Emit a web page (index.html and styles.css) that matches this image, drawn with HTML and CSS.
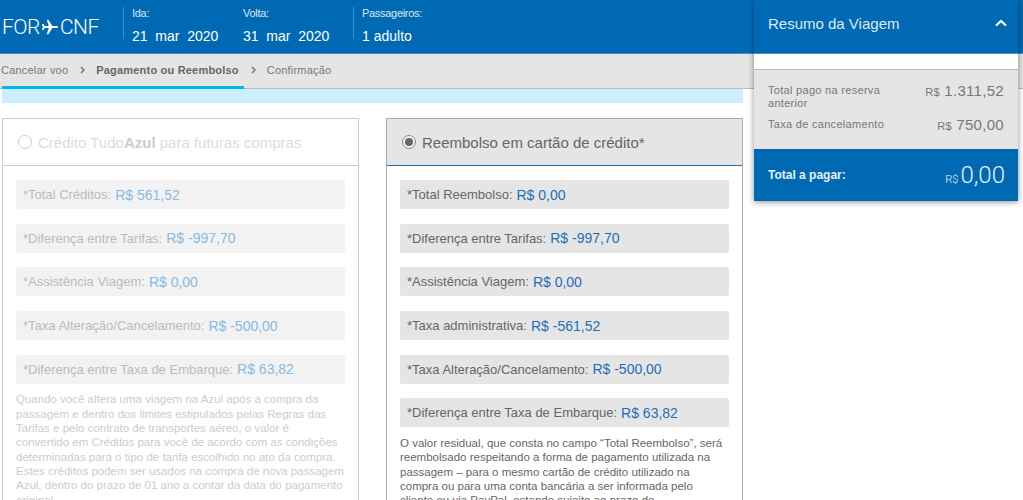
FILE: index.html
```html
<!DOCTYPE html>
<html>
<head>
	<title>Pagamento ou Reembolso</title>
	<meta name="viewport" content="width=device-width,initial-scale=1">
	<link rel="stylesheet" href="styles.css">
</head>
<body>

	<div class="topbar">
		<div class="route">
			<span>FOR</span>
			<svg class="plane" viewBox="0 0 20 20" width="18" height="18"><path d="M19 10c0-.8-.8-1.200-1.800-1.200h-4.600L8.200 2H6.300l2.300 6.800H4.200L2.600 6.600H1l1 3.400-1 3.400h1.600l1.600-2.200h4.400L6.300 18h1.900l4.400-6.800h4.600c1 0 1.800-.4 1.800-1.200z" fill="#fff"/></svg>
			<span>CNF</span>
		</div>
		<div class="info info-first">
			<label>Ida:</label>
			<strong>21 &nbsp;mar &nbsp;2020</strong>
		</div>
		<div class="info">
			<label>Volta:</label>
			<strong>31 &nbsp;mar &nbsp;2020</strong>
		</div>
		<div class="info info-last">
			<label>Passageiros:</label>
			<strong>1 adulto</strong>
		</div>
	</div>

	<div class="steps">
		<span class="step">Cancelar voo</span>
		<svg class="sep" viewBox="0 0 6 8" width="6" height="8"><path d="M1 1l3 3-3 3" fill="none" stroke="#777" stroke-width="1.500"/></svg>
		<span class="step active">Pagamento ou Reembolso</span>
		<svg class="sep" viewBox="0 0 6 8" width="6" height="8"><path d="M1 1l3 3-3 3" fill="none" stroke="#777" stroke-width="1.500"/></svg>
		<span class="step">Confirmação</span>
	</div>

	<div class="main">
		<div class="notice"></div>

		<div class="options">
			<div class="card disabled">
				<div class="card-head">
					<span class="radio"></span>
					<span>Crédito Tudo<b>Azul</b> para futuras compras</span>
				</div>
				<div class="card-body">
					<div class="row">*Total Créditos: <span class="val">R$ 561,52</span></div>
					<div class="row">*Diferença entre Tarifas: <span class="val">R$ -997,70</span></div>
					<div class="row">*Assistência Viagem: <span class="val">R$ 0,00</span></div>
					<div class="row">*Taxa Alteração/Cancelamento: <span class="val">R$ -500,00</span></div>
					<div class="row">*Diferença entre Taxa de Embarque: <span class="val">R$ 63,82</span></div>
					<p>Quando você altera uma viagem na Azul após a compra da passagem e dentro dos limites estipulados pelas Regras das Tarifas e pelo contrato de transportes aéreo, o valor é convertido em Créditos para você de acordo com as condições determinadas para o tipo de tarifa escolhido no ato da compra. Estes créditos podem ser usados na compra de nova passagem Azul, dentro do prazo de 01 ano a contar da data do pagamento original.</p>
				</div>
			</div>

			<div class="card selected">
				<div class="card-head">
					<span class="radio checked"></span>
					<span>Reembolso em cartão de crédito*</span>
				</div>
				<div class="card-body">
					<div class="row">*Total Reembolso: <span class="val">R$ 0,00</span></div>
					<div class="row">*Diferença entre Tarifas: <span class="val">R$ -997,70</span></div>
					<div class="row">*Assistência Viagem: <span class="val">R$ 0,00</span></div>
					<div class="row">*Taxa administrativa: <span class="val">R$ -561,52</span></div>
					<div class="row">*Taxa Alteração/Cancelamento: <span class="val">R$ -500,00</span></div>
					<div class="row">*Diferença entre Taxa de Embarque: <span class="val">R$ 63,82</span></div>
					<p>O valor residual, que consta no campo “Total Reembolso”, será reembolsado respeitando a forma de pagamento utilizada na passagem – para o mesmo cartão de crédito utilizado na compra ou para uma conta bancária a ser informada pelo cliente ou via PayPal, estando sujeito ao prazo de processamento do pedido.</p>
				</div>
			</div>
		</div>
	</div>

	<div class="summary">
		<div class="summary-head">
			<span>Resumo da Viagem</span>
			<svg viewBox="0 0 12 8" width="12" height="8"><path d="M1 6.500l5-4.500 5 4.500" fill="none" stroke="#fff" stroke-width="2.200"/></svg>
		</div>
		<div class="summary-gap"></div>
		<div class="summary-list">
			<div class="line">
				<span class="line-label">Total pago na reserva anterior</span>
				<span class="price"><small>R$</small> 1.311,52</span>
			</div>
			<div class="line">
				<span class="line-label">Taxa de cancelamento</span>
				<span class="price"><small>R$</small> 750,00</span>
			</div>
		</div>
		<div class="summary-total">
			<span>Total a pagar:</span>
			<span class="total-price"><small>R$</small>0,00</span>
		</div>
	</div>

</body>
</html>
```

FILE: styles.css
```css
*{
	box-sizing: border-box;
	padding: 0;
	margin: 0;
}

html, body{
	height: 100%;
	overflow: hidden;
}

body{
	background-color: #fff;
	font-family: "Liberation Sans", Arial, sans-serif;
	color: #666;
}

.topbar{
	height: 54px;
	background-color: #0069b4;
	border-bottom: 1px solid #3f8fca;
	color: #fff;
	display: flex;
	align-items: flex-start;
}

.route{
	width: 123px;
	height: 53px;
	padding-left: 2px;
	display: flex;
	align-items: center;
	gap: 1px;
	font-family: Roboto, sans-serif;
	font-weight: 300;
	font-size: 21px;
	letter-spacing: -.5px;
}

.info{
	margin-top: 7px;
	height: 32px;
	display: flex;
	flex-direction: column;
	width: 111px;
}
.info-first{
	border-left: 1px solid #3f8fca;
	padding-left: 8px;
	width: 120px;
}
.info-last{
	border-left: 1px solid #3f8fca;
	padding-left: 8px;
	margin-left: -1px;
}
.info label{
	font-size: 11px;
	letter-spacing: -.3px;
	line-height: 12px;
	color: #d7e8f4;
}
.info strong{
	font-weight: normal;
	font-size: 14px;
	line-height: 16px;
	margin-top: 9px;
	white-space: nowrap;
}

.steps{
	height: 35px;
	background-color: #e5e5e5;
	border-bottom: 1px solid #bbb;
	padding-left: 1px;
	display: flex;
	align-items: center;
	font-size: 11px;
	letter-spacing: .2px;
	color: #777;
	padding-bottom: 3px;
	position: relative;
}
.step.active{
	font-weight: bold;
	color: #666;
}
.sep{
	margin: 0 10px 0 12px;
}
.steps .active::after{
	content: "";
	position: absolute;
	left: 2px;
	width: 242px;
	bottom: -1px;
	height: 3px;
	background-color: #00b5e8;
}

.main{
	padding: 0 280px 0 2px;
}

.notice{
	height: 14px;
	background-color: #ccefff;
}

.options{
	display: grid;
	grid-template-columns: 357px 357px;
	column-gap: 27px;
	margin-top: 15px;
}

.card{
	border: 1px solid #ccc;
	padding-bottom: 40px;
}
.card-head{
	height: 47px;
	padding-left: 15px;
	display: flex;
	align-items: center;
	gap: 6px;
	font-size: 15px;
	border-bottom: 1px solid #ccc;
}
.card-body{
	padding: 14px 13px 0;
}

.radio{
	width: 14px;
	height: 14px;
	border-radius: 50%;
	border: 1px solid #ccc;
	background-color: #fff;
	position: relative;
}
.radio.checked{
	border-color: #888;
	background-color: #f2f2f2;
}
.radio.checked::after{
	content: "";
	position: absolute;
	left: 2px;
	top: 2px;
	width: 8px;
	height: 8px;
	border-radius: 50%;
	background-color: #666;
}

.row{
	height: 29px;
	margin-bottom: 14.7px;
	padding-left: 7px;
	display: flex;
	align-items: center;
	gap: 4px;
	font-size: 13px;
	background-color: #e5e5e5;
	border-radius: 2px;
}
.val{
	font-size: 14px;
	color: #1f6db5;
}

.card p{
	font-size: 11.5px;
	line-height: 14.3px;
	margin-top: -6px;
	color: #666;
}

.disabled{
	color: #ccc;
}
.disabled .row{
	background-color: #f2f2f2;
	color: #bbb;
}
.disabled .val{
	color: #86bbe3;
}
.disabled p{
	color: #ccc;
}
.disabled .card-head{
	color: #ddd;
}
.disabled .card-head b{
	color: #ccc;
}

.selected{
	border-color: #aaa;
}
.selected .card-head{
	background-color: #e5e5e5;
	border-bottom-color: #1f6db5;
	color: #666;
}

.summary{
	position: absolute;
	left: 754px;
	top: 0;
	width: 264px;
	box-shadow: 0 1px 6px rgba(0,0,0,.45);
}
.summary-head{
	height: 54px;
	background-color: #0069b4;
	border-bottom: 1px solid #3f8fca;
	padding: 0 11px 7px 14px;
	display: flex;
	justify-content: space-between;
	align-items: center;
	color: #dcebf6;
	font-size: 15px;
}
.summary-gap{
	height: 15px;
	background-color: #fff;
}
.summary-list{
	height: 80px;
	background-color: #e5e5e5;
	border-top: 1px solid #bbb;
	padding: 14px 14px 0;
	font-size: 11px;
	letter-spacing: .3px;
	color: #777;
}
.line{
	display: flex;
	justify-content: space-between;
	margin-bottom: 8px;
	line-height: 13px;
}
.line-label{
	width: 125px;
}
.price{
	font-size: 15px;
	white-space: nowrap;
}
.price small{
	font-size: 11px;
}
.summary-total{
	height: 52px;
	background-color: #0069b4;
	color: #e6f0f8;
	padding: 0 13px 0 14px;
	display: flex;
	justify-content: space-between;
	align-items: center;
	font-size: 12px;
	font-weight: bold;
}
.total-price{
	font-size: 24px;
	font-weight: normal;
	font-family: Roboto, sans-serif;
	font-weight: 300;
}
.total-price small{
	font-size: 11px;
	margin-right: 2px;
}
```
